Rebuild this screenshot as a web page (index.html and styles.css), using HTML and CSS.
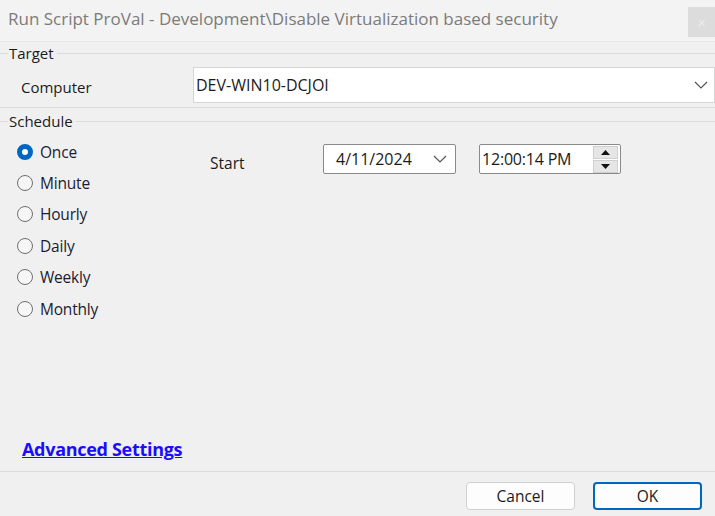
FILE: index.html
```html
<!DOCTYPE html>
<html>
<head>
	<title>Run Script</title>
	<link rel="stylesheet" href="styles.css">
</head>
<body>
	<div class="window">
		<div class="titlebar">
			<span class="title">Run Script ProVal - Development\Disable Virtualization based security</span>
			<span class="close">&#x2715;</span>
		</div>

		<div class="group-head"><span class="rule-left"></span><span class="group-label">Target</span><span class="rule"></span></div>
		<div class="computer-row">
			<span class="field-label">Computer</span>
			<div class="combo">
				<span>DEV-WIN10-DCJOI</span>
				<svg class="chevron" width="14" height="8" viewBox="0 0 14 8"><path d="M1 1 L7 7 L13 1" fill="none" stroke="#555" stroke-width="1.2"/></svg>
			</div>
		</div>
		<div class="divider"></div>

		<div class="group-head"><span class="rule-left"></span><span class="group-label">Schedule</span><span class="rule"></span></div>
		<div class="schedule">
			<div class="radios">
				<label class="radio checked"><span class="dot"></span>Once</label>
				<label class="radio"><span class="dot"></span>Minute</label>
				<label class="radio"><span class="dot"></span>Hourly</label>
				<label class="radio"><span class="dot"></span>Daily</label>
				<label class="radio"><span class="dot"></span>Weekly</label>
				<label class="radio"><span class="dot"></span>Monthly</label>
			</div>
			<div class="start-row">
				<span class="start-label">Start</span>
				<div class="date-box">
					<span>4/11/2024</span>
					<svg class="chevron" width="14" height="8" viewBox="0 0 14 8"><path d="M1 1 L7 7 L13 1" fill="none" stroke="#555" stroke-width="1.2"/></svg>
				</div>
				<div class="time-box">
					<span>12:00:14 PM</span>
					<div class="spinner">
						<span class="spin"><svg width="9" height="5" viewBox="0 0 9 5"><path d="M0 5 L4.5 0 L9 5 Z" fill="#111"/></svg></span>
						<span class="spin"><svg width="9" height="5" viewBox="0 0 9 5"><path d="M0 0 L4.5 5 L9 0 Z" fill="#111"/></svg></span>
					</div>
				</div>
			</div>
		</div>

		<div class="advanced"><a href="#">Advanced Settings</a></div>
		<div class="footer">
			<button class="btn">Cancel</button>
			<button class="btn primary">OK</button>
		</div>
	</div>
</body>
</html>
```

FILE: styles.css
```css
body {
	margin: 0;
	background-color: #f0f0f0;
	font-family: "Open Sans", "Noto Sans", sans-serif;
	color: #1b1b1b;
}
.window {
	width: 715px;
	height: 516px;
	display: flex;
	flex-direction: column;
	overflow: hidden;
}
.titlebar {
	height: 42px;
	background-color: #f3f3f3;
	display: flex;
	align-items: center;
	padding-left: 8px;
	padding-bottom: 5px;
	box-sizing: border-box;
	border-bottom: 1px solid #e8e8e8;
}
.title {
	font-size: 17px;
	color: #7b7b7b;
	white-space: nowrap;
}
.close {
	margin-left: auto;
	width: 27px;
	height: 30px;
	background-color: #dcdcdc;
	color: #ececec;
	font-size: 11px;
	display: flex;
	align-items: center;
	justify-content: center;
	align-self: flex-start;
	margin-top: 7px;
}

.group-head {
	height: 22px;
	display: flex;
	align-items: center;
}
.rule-left {
	width: 8px;
	border-top: 1px solid #dcdcdc;
}
.group-label {
	font-size: 15px;
	padding: 0 3px 0 1px;
}
.rule {
	flex: 1;
	border-top: 1px solid #dcdcdc;
}

.computer-row {
	height: 42px;
	display: flex;
	align-items: center;
}
.field-label {
	font-size: 15px;
	width: 172px;
	padding-left: 21px;
	padding-top: 4px;
}
.combo {
	flex: 1;
	height: 36px;
	background-color: #fff;
	border: 1px solid #d6d6d6;
	box-sizing: border-box;
	display: flex;
	align-items: center;
	padding: 0 6px 0 2px;
	font-size: 16px;
}
.chevron {
	margin-left: auto;
}
.divider {
	border-top: 1px solid #dcdcdc;
	margin-top: 1px;
	margin-bottom: 2px;
}

.schedule {
	flex: 1;
	display: flex;
}
.radios {
	width: 190px;
	padding-left: 17px;
	padding-top: 9px;
	display: flex;
	flex-direction: column;
	gap: 10px;
}
.radio {
	display: flex;
	align-items: center;
	height: 21.4px;
	font-size: 15.5px;
	letter-spacing: -0.2px;
	color: #1c1c30;
}
.dot {
	width: 14px;
	height: 14px;
	border: 1px solid #6f6f6f;
	border-radius: 50%;
	margin-right: 7px;
	background-color: #f6f6f6;
}
.radio.checked .dot {
	width: 6px;
	height: 6px;
	border: 5px solid #0067c0;
	background-color: #fff;
}

.start-row {
	padding-top: 12px;
	display: flex;
	align-items: flex-start;
	height: 30px;
}
.start-label {
	font-size: 15.5px;
	width: 113px;
	padding-top: 8px;
	padding-left: 3px;
}
.date-box, .time-box {
	height: 30px;
	box-sizing: border-box;
	background-color: #fff;
	border: 1px solid #8a8a8a;
	border-radius: 2px;
	display: flex;
	align-items: center;
	font-size: 16px;
}
.date-box {
	width: 133px;
	padding: 0 8px 0 12px;
}
.time-box {
	width: 142px;
	margin-left: 23px;
	padding-left: 2px;
	letter-spacing: -0.2px;
}
.spinner {
	margin-left: auto;
	margin-right: 2px;
	display: flex;
	flex-direction: column;
	gap: 1px;
}
.spin {
	width: 23px;
	height: 11px;
	background-color: #e6e6e6;
	border: 1px solid #cfcfcf;
	display: flex;
	align-items: center;
	justify-content: center;
}

.advanced {
	height: 34px;
	padding-left: 22px;
}
.advanced a {
	color: #1a0dff;
	font-weight: bold;
	font-size: 18px;
	letter-spacing: -0.3px;
}
.footer {
	height: 45px;
	box-sizing: border-box;
	border-top: 1px solid #dcdcdc;
	display: flex;
	justify-content: flex-end;
	align-items: flex-start;
	padding: 10px 13px 0 0;
	gap: 18px;
}
.btn {
	width: 109px;
	height: 28px;
	background-color: #fdfdfd;
	border: 1px solid #d0d0d0;
	border-radius: 4px;
	font-family: "Open Sans", "Noto Sans", sans-serif;
	font-size: 15.5px;
	color: #1b1b1b;
}
.btn.primary {
	border: 2px solid #0067c0;
}
```
